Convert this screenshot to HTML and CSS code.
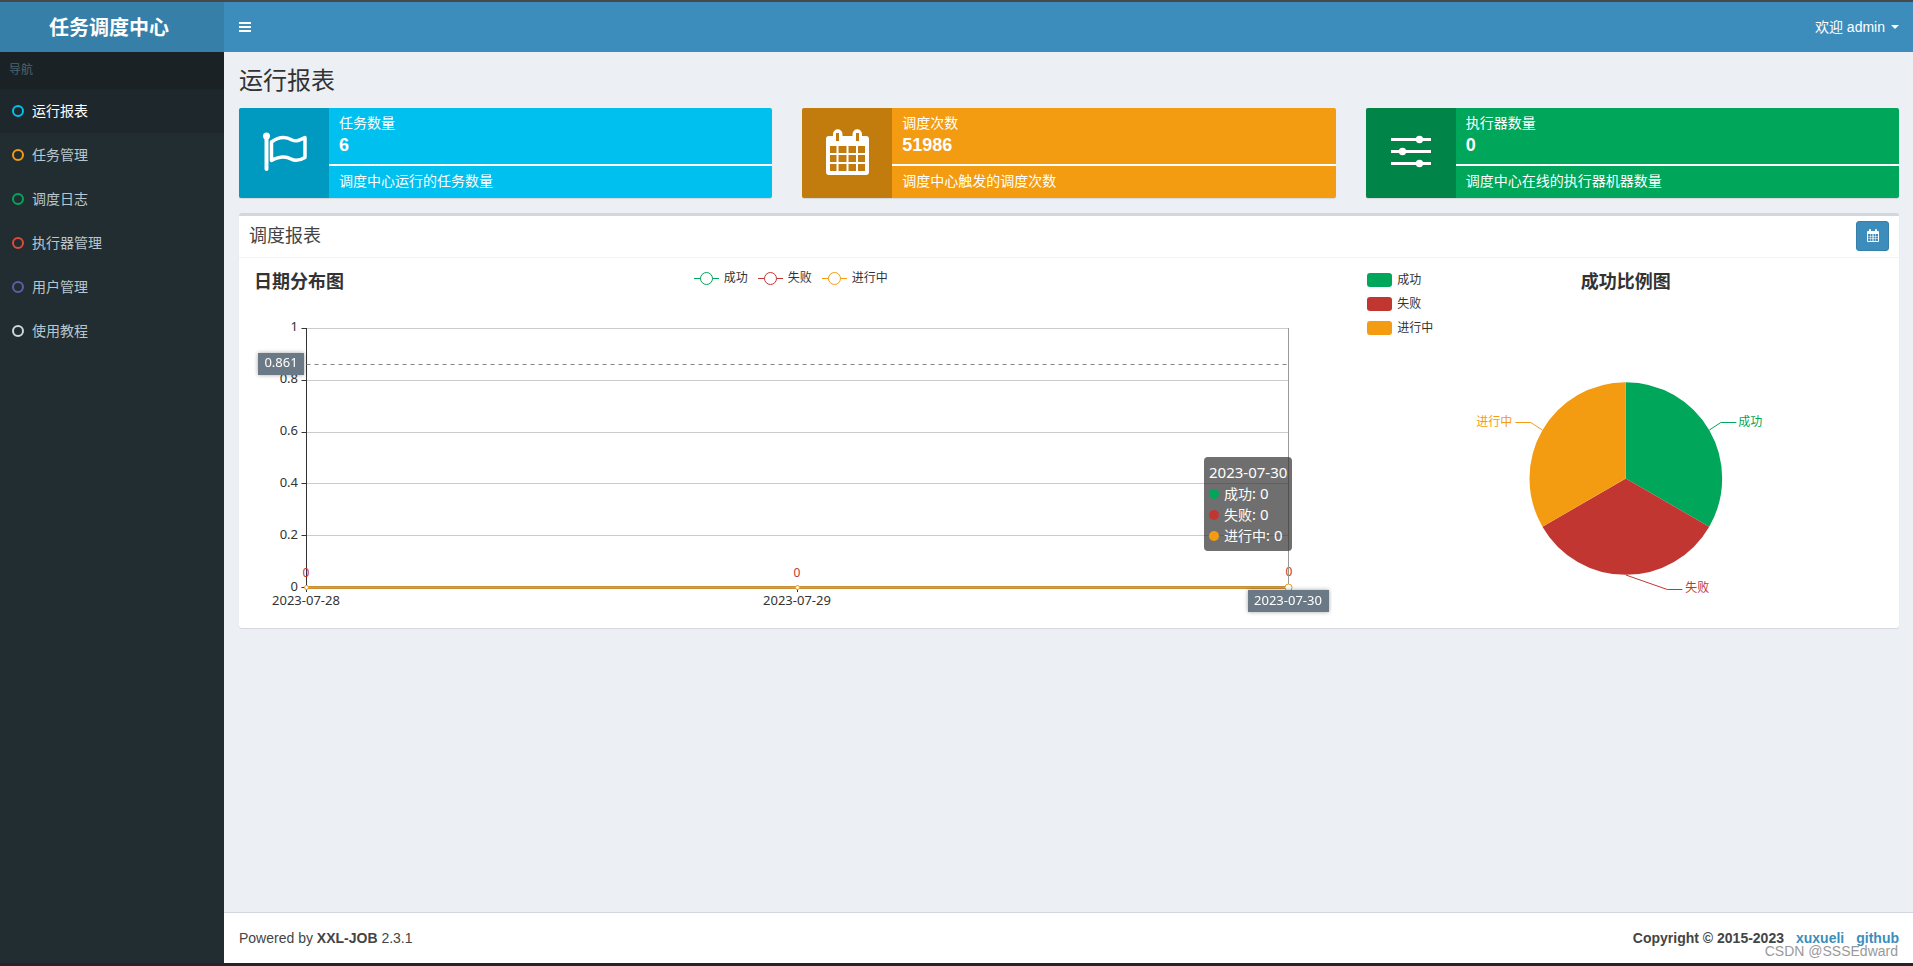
FILE: index.html
```html
<!DOCTYPE html>
<html lang="zh-CN">
<head>
<meta charset="utf-8">
<meta name="viewport" content="width=device-width, initial-scale=1">
<title>任务调度中心</title>
<link rel="stylesheet" href="styles.css">
</head>
<body>
<div class="wrapper">
  <header class="main-header">
    <a class="logo" href="#">任务调度中心</a>
    <nav class="navbar">
      <button class="sidebar-toggle" type="button" aria-label="切换导航">
        <svg width="12" height="10" viewBox="0 0 12 10"><path fill="#fff" d="M0 0h12v2H0zM0 4h12v2H0zM0 8h12v2H0z"/></svg>
      </button>
      <button class="user-menu" type="button">欢迎 admin<span class="caret"></span></button>
    </nav>
  </header>

  <div class="main">
    <aside class="sidebar">
      <div class="nav-title">导航</div>
      <nav class="nav-list">
        <a class="nav-item active" href="#"><span class="ring aqua"></span>运行报表</a>
        <a class="nav-item" href="#"><span class="ring yellow"></span>任务管理</a>
        <a class="nav-item" href="#"><span class="ring green"></span>调度日志</a>
        <a class="nav-item" href="#"><span class="ring red"></span>执行器管理</a>
        <a class="nav-item" href="#"><span class="ring purple"></span>用户管理</a>
        <a class="nav-item" href="#"><span class="ring gray"></span>使用教程</a>
      </nav>
    </aside>

    <div class="page">
      <main class="content">
        <h1>运行报表</h1>

        <section class="info-row">
          <div class="info-box bg-aqua">
            <div class="info-icon">
              <svg width="90" height="90" viewBox="0 0 90 90">
                <circle cx="27.5" cy="28" r="3.5" fill="#fff"/>
                <path d="M27.500 28V61" stroke="#fff" stroke-width="4" stroke-linecap="round"/>
                <path d="M32.500 34C40 28.500 47 28.500 53 32C57.500 34 61 32 66 29.500V49.500C61 52.500 56.500 53.500 52 51C46 47.500 40 48.500 32.500 52.500Z" fill="none" stroke="#fff" stroke-width="3.500" stroke-linejoin="round"/>
              </svg>
            </div>
            <div class="info-content">
              <span class="info-text">任务数量</span>
              <span class="info-number">6</span>
              <div class="progress"></div>
              <span class="info-text">调度中心运行的任务数量</span>
            </div>
          </div>
          <div class="info-box bg-yellow">
            <div class="info-icon">
              <svg width="90" height="90" viewBox="0 0 90 90">
                <path fill="#fff" fill-rule="evenodd" d="M27 28h4v-2a4.500 4.500 0 0 1 9.500 0v2h10v-2a4.500 4.500 0 0 1 9.500 0v2h4a3 3 0 0 1 3 3v33a3 3 0 0 1-3 3H27a3 3 0 0 1-3-3V31a3 3 0 0 1 3-3ZM34 25v8h3v-8ZM54 25v8h3v-8ZM28 38v7h6.500V38ZM36.500 38v7h8V38ZM46.500 38v7h7.500V38ZM56 38v7h7V38ZM28 47v7h6.500v-7ZM36.500 47v7h8v-7ZM46.500 47v7h7.500v-7ZM56 47v7h7v-7ZM28 56v7h6.500v-7ZM36.500 56v7h8v-7ZM46.500 56v7h7.500v-7ZM56 56v7h7v-7Z"/>
              </svg>
            </div>
            <div class="info-content">
              <span class="info-text">调度次数</span>
              <span class="info-number">51986</span>
              <div class="progress"></div>
              <span class="info-text">调度中心触发的调度次数</span>
            </div>
          </div>
          <div class="info-box bg-green">
            <div class="info-icon">
              <svg width="90" height="90" viewBox="0 0 90 90">
                <path d="M25 31.500H65M25 43.500H65M25 55.500H65" stroke="#fff" stroke-width="3"/>
                <g fill="#fff"><circle cx="53.500" cy="31.500" r="3.700"/><circle cx="36.500" cy="43.500" r="3.700"/><circle cx="53.500" cy="55.500" r="3.700"/></g>
              </svg>
            </div>
            <div class="info-content">
              <span class="info-text">执行器数量</span>
              <span class="info-number">0</span>
              <div class="progress"></div>
              <span class="info-text">调度中心在线的执行器机器数量</span>
            </div>
          </div>
        </section>

        <section class="box">
          <header class="box-header">
            <h2>调度报表</h2>
            <button class="date-button" type="button" aria-label="选择日期">
              <svg width="12" height="13" viewBox="0 0 12 13">
                <path fill="#fff" fill-rule="evenodd" d="M1 2h1V1a1 1 0 0 1 2 0v1h4V1a1 1 0 0 1 2 0v1h1a1 1 0 0 1 1 1v9a1 1 0 0 1-1 1H1a1 1 0 0 1-1-1V3a1 1 0 0 1 1-1ZM1 5v2h2V5ZM3.500 5v2h2V5ZM6.500 5v2h2V5ZM9 5v2h2V5ZM1 7.500v2h2v-2ZM3.500 7.500v2h2v-2ZM6.500 7.500v2h2v-2ZM9 7.500v2h2v-2ZM1 10v2h2v-2ZM3.500 10v2h2v-2ZM6.500 10v2h2v-2ZM9 10v2h2v-2Z"/>
              </svg>
            </button>
          </header>
          <div class="box-body">
            <div class="chart line-chart">
              <svg class="plot" viewBox="0 0 1082 350" preserveAspectRatio="xMinYMin meet">
                <path d="M57.500 60.500H1039.500M57.500 112.500H1039.500M57.500 164.500H1039.500M57.500 215.500H1039.500M57.500 267.500H1039.500" stroke="#ccc"/>
                <path d="M57.500 60V324M52.500 60.500H57M52.500 112.500H57M52.500 164.500H57M52.500 215.500H57M52.500 267.500H57M52.500 319.500H1039.500M548.500 320V324M1039.500 320V324" stroke="#333"/>
                <g class="axis-text" text-anchor="end">
                  <text x="49" y="63">1</text>
                  <text x="49" y="115">0.8</text>
                  <text x="49" y="167">0.6</text>
                  <text x="49" y="219">0.4</text>
                  <text x="49" y="271">0.2</text>
                  <text x="49" y="323">0</text>
                </g>
                <g class="axis-text" text-anchor="middle">
                  <text x="57" y="337">2023-07-28</text>
                  <text x="548" y="337">2023-07-29</text>
                </g>
                <path d="M57.500 319.500H1039.500" stroke="#c88f35" stroke-width="3"/>
                <path d="M57.500 319.500H1039.500" stroke="#f39c12"/>
                <g class="value-text" text-anchor="middle">
                  <text x="57" y="309">0</text>
                  <text x="548" y="309">0</text>
                  <text x="1040" y="308">0</text>
                </g>
                <path d="M57.500 96.500H1039.500" stroke="#888" stroke-dasharray="4 4"/>
                <path d="M1039.500 60V319" stroke="#999"/>
                <g fill="#fff" stroke="#f39c12">
                  <circle cx="57.500" cy="319.500" r="2"/>
                  <circle cx="548.500" cy="319.500" r="2"/>
                  <circle cx="1039.500" cy="319.500" r="3.500"/>
                </g>
                <g class="pointer-label">
                  <rect x="9" y="85" width="46" height="22"/>
                  <text x="32" y="99" text-anchor="middle">0.861</text>
                  <rect x="999" y="322" width="81" height="22"/>
                  <text x="1039" y="337" text-anchor="middle">2023-07-30</text>
                </g>
              </svg>
              <h3>日期分布图</h3>
              <ul class="line-legend">
                <li><svg width="25" height="14" viewBox="0 0 25 14"><path d="M0 7.500H25" stroke="#00a65a"/><circle cx="12.500" cy="7.500" r="6" fill="#fff" stroke="#00a65a"/></svg>成功</li>
                <li><svg width="25" height="14" viewBox="0 0 25 14"><path d="M0 7.500H25" stroke="#c23632"/><circle cx="12.500" cy="7.500" r="6" fill="#fff" stroke="#c23632"/></svg>失败</li>
                <li><svg width="25" height="14" viewBox="0 0 25 14"><path d="M0 7.500H25" stroke="#f39c12"/><circle cx="12.500" cy="7.500" r="6" fill="#fff" stroke="#f39c12"/></svg>进行中</li>
              </ul>
              <div class="tooltip">
                <div class="tip-date">2023-07-30</div>
                <div class="tip-row"><span class="dot green"></span>成功: <span class="tip-value">0</span></div>
                <div class="tip-row"><span class="dot red"></span>失败: <span class="tip-value">0</span></div>
                <div class="tip-row"><span class="dot yellow"></span>进行中: <span class="tip-value">0</span></div>
              </div>
            </div>

            <div class="chart pie-chart">
              <svg class="plot" viewBox="0 0 526 350" preserveAspectRatio="xMidYMin meet">
                <path fill="#00a65a" d="M263.500 210.500V114.200A96.300 96.300 0 0 1 346.900 258.700Z"/>
                <path fill="#c23632" d="M263.500 210.500L346.900 258.700A96.300 96.300 0 0 1 180.100 258.700Z"/>
                <path fill="#f39c12" d="M263.500 210.500L180.100 258.700A96.300 96.300 0 0 1 263.500 114.200Z"/>
                <g fill="none">
                  <path stroke="#00a65a" d="M347 162L358.500 154.500H374"/>
                  <path stroke="#c23632" d="M263.500 307L305 321.500H320"/>
                  <path stroke="#f39c12" d="M180 162L168.500 154.500H153"/>
                </g>
                <g class="slice-text">
                  <text x="376" y="158" fill="#00a65a">成功</text>
                  <text x="323" y="324" fill="#c23632">失败</text>
                  <text x="150" y="158" fill="#f39c12" text-anchor="end">进行中</text>
                </g>
              </svg>
              <ul class="pie-legend">
                <li><span class="swatch green"></span>成功</li>
                <li><span class="swatch red"></span>失败</li>
                <li><span class="swatch yellow"></span>进行中</li>
              </ul>
              <h3>成功比例图</h3>
            </div>
          </div>
        </section>
      </main>

      <footer class="main-footer">
        <div>Powered by <b>XXL-JOB</b> 2.3.1</div>
        <div class="copyright"><b>Copyright © 2015-2023</b><a href="#">xuxueli</a><a href="#">github</a></div>
        <div class="watermark">CSDN @SSSEdward</div>
      </footer>
    </div>
  </div>
</div>
</body>
</html>
```

FILE: styles.css
```css
* { box-sizing: border-box; }

body {
  margin: 0;
  font: 14px/20px "Liberation Sans", "Noto Sans CJK SC", sans-serif;
  color: #333;
}

a { text-decoration: none; color: #3c8dbc; }
button { font: inherit; border: 0; cursor: pointer; }
h1, h2, h3, ul { margin: 0; padding: 0; }
ul { list-style: none; }
svg { display: block; }

.wrapper {
  display: flex;
  flex-direction: column;
  min-height: 100vh;
  border-top: 2px solid #48484a;
  border-bottom: 3px solid #2b2024;
}

/* Header */
.main-header { display: flex; height: 50px; }
.logo {
  flex: 0 0 224px;
  padding-right: 6px;
  background: #367fa9;
  color: #fff;
  font-size: 20px;
  font-weight: bold;
  line-height: 52px;
  text-align: center;
}
.navbar {
  flex: 1;
  display: flex;
  justify-content: space-between;
  background: #3c8dbc;
}
.sidebar-toggle { padding: 0 15px; background: none; }
.user-menu {
  display: flex;
  align-items: center;
  gap: 6px;
  padding: 0 14px;
  background: none;
  color: #fff;
}
.caret {
  border-top: 4px solid #fff;
  border-left: 4px solid transparent;
  border-right: 4px solid transparent;
}

/* Sidebar */
.main { flex: 1; display: flex; }
.sidebar { flex: 0 0 224px; background: #222d32; }
.nav-title {
  padding: 8px 9px 9px;
  background: #1a2226;
  color: #4b646f;
  font-size: 12px;
}
.nav-item {
  display: flex;
  align-items: center;
  gap: 8px;
  height: 44px;
  padding-left: 12px;
  color: #b8c7ce;
}
.nav-item.active { background: #1e282c; color: #fff; }
.ring { width: 12px; height: 12px; border: 2px solid; border-radius: 50%; }
.ring.aqua { color: #00c0ef; }
.ring.yellow { color: #f39c12; }
.ring.green { color: #00a65a; }
.ring.red { color: #dd4b39; }
.ring.purple { color: #605ca8; }
.ring.gray { color: #d2d6de; }

/* Page */
.page {
  flex: 1;
  min-width: 0;
  display: flex;
  flex-direction: column;
  background: #ecf0f5;
}
.content { flex: 1; padding: 16px 14px 0 15px; }
h1 { font-size: 24px; font-weight: 400; line-height: 26px; padding-bottom: 14px; }

.info-row {
  display: grid;
  grid-template-columns: repeat(3, 1fr);
  gap: 30px;
  margin-bottom: 15px;
}
.info-box {
  display: flex;
  height: 90px;
  border-radius: 2px;
  overflow: hidden;
  color: #fff;
  box-shadow: 0 1px 1px rgba(0, 0, 0, .1);
}
.info-icon { flex: 0 0 90px; background: rgba(0, 0, 0, .2); }
.info-content { flex: 1; padding: 5px 10px; }
.info-text, .info-number { display: block; }
.info-number { font-size: 18px; font-weight: bold; line-height: 24px; }
.progress { height: 2px; margin: 7px -10px 5px; background: #fff; }
.bg-aqua { background: #00c0ef; }
.bg-yellow { background: #f39c12; }
.bg-green { background: #00a65a; }

.box {
  border-top: 3px solid #d2d6de;
  border-radius: 3px;
  background: #fff;
  box-shadow: 0 1px 1px rgba(0, 0, 0, .1);
}
.box-header {
  display: flex;
  justify-content: space-between;
  align-items: center;
  height: 42px;
  padding: 0 10px 2px;
  border-bottom: 1px solid #f4f4f4;
}
h2 { font-size: 18px; font-weight: 400; line-height: 20px; color: #444; }
.date-button {
  display: grid;
  place-items: center;
  width: 33px;
  height: 30px;
  border: 1px solid #367fa9;
  border-radius: 3px;
  background: #3c8dbc;
}
.box-body { display: flex; gap: 30px; padding: 10px; }

/* Charts */
.chart { position: relative; min-width: 0; height: 350px; }
.line-chart { flex: 2 1 30px; }
.pie-chart { flex: 1 1 0; }
.plot { width: 100%; height: 350px; }
h3 { font-size: 18px; font-weight: bold; line-height: 28px; }
.line-chart h3 { position: absolute; top: 0; left: 5px; }
.pie-chart h3 { position: absolute; top: 0; left: 0; right: 0; text-align: center; }

.axis-text, .value-text, .pointer-label text { font-family: "Noto Sans", sans-serif; font-size: 13px; }
.axis-text { fill: #333; }
.value-text { fill: #c23632; font-size: 12px; }
.pointer-label { fill: #6a7985; filter: drop-shadow(0 0 2px rgba(0, 0, 0, .35)); }
.pointer-label text { fill: #fff; }
.slice-text { font-family: "Noto Sans CJK SC", sans-serif; font-size: 12px; }

.line-legend {
  position: absolute;
  top: 0;
  left: 0;
  right: 0;
  display: flex;
  justify-content: center;
  gap: 10px;
  font-size: 12px;
}
.line-legend li, .pie-legend li { display: flex; align-items: center; gap: 5px; }
.pie-legend {
  position: absolute;
  top: 2px;
  left: 5px;
  display: grid;
  gap: 4px;
  font-size: 12px;
}
.swatch { width: 25px; height: 14px; border-radius: 3px; }
.swatch.green, .dot.green { background: #00a65a; }
.swatch.red, .dot.red { background: #c23632; }
.swatch.yellow, .dot.yellow { background: #f39c12; }

.tooltip {
  position: absolute;
  left: 955px;
  top: 189px;
  padding: 5px;
  border-radius: 4px;
  background: rgba(50, 50, 50, .7);
  color: #fff;
  line-height: 21px;
  white-space: nowrap;
}
.tip-date, .tip-value { font-family: "Noto Sans", sans-serif; font-size: 15px; }
.tip-row { display: flex; align-items: center; font-family: "Noto Sans CJK SC", sans-serif; }
.tip-value { margin-left: 4px; }
.dot { width: 10px; height: 10px; margin-right: 5px; border-radius: 50%; }

/* Footer */
.main-footer {
  position: relative;
  display: flex;
  justify-content: space-between;
  padding: 15px 14px 15px 15px;
  border-top: 1px solid #d2d6de;
  background: #fff;
  color: #444;
}
.copyright { display: flex; gap: 12px; font-weight: bold; }
.watermark {
  position: absolute;
  right: 15px;
  bottom: 2px;
  color: #999;
  font: 14px/20px "Liberation Sans", sans-serif;
}
```
